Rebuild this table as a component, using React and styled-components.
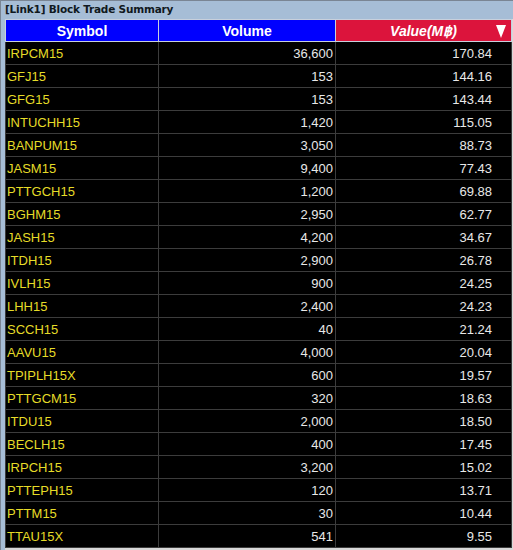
import React from 'react';
import styled, {createGlobalStyle} from 'styled-components';

const GlobalStyle = createGlobalStyle`
    html, body {
        margin: 0;
        padding: 0;
        background: #d4d0c8;
    }
`;

const rows = [
    ['IRPCM15', '36,600', '170.84'],
    ['GFJ15', '153', '144.16'],
    ['GFG15', '153', '143.44'],
    ['INTUCHH15', '1,420', '115.05'],
    ['BANPUM15', '3,050', '88.73'],
    ['JASM15', '9,400', '77.43'],
    ['PTTGCH15', '1,200', '69.88'],
    ['BGHM15', '2,950', '62.77'],
    ['JASH15', '4,200', '34.67'],
    ['ITDH15', '2,900', '26.78'],
    ['IVLH15', '900', '24.25'],
    ['LHH15', '2,400', '24.23'],
    ['SCCH15', '40', '21.24'],
    ['AAVU15', '4,000', '20.04'],
    ['TPIPLH15X', '600', '19.57'],
    ['PTTGCM15', '320', '18.63'],
    ['ITDU15', '2,000', '18.50'],
    ['BECLH15', '400', '17.45'],
    ['IRPCH15', '3,200', '15.02'],
    ['PTTEPH15', '120', '13.71'],
    ['PTTM15', '30', '10.44'],
    ['TTAU15X', '541', '9.55'],
];

const Frame = styled.div`
    width: 513px;
    height: 550px;
    box-sizing: border-box;
    background: #a6bdd6;
    border-top: 1px solid #7a8594;
    border-left: 1px solid #7a8594;
    display: flex;
    flex-direction: column;
    overflow: hidden;
`;

const TitleBar = styled.div`
    height: 18px;
    line-height: 17px;
    padding-left: 4px;
    font-family: "DejaVu Sans", sans-serif;
    font-weight: bold;
    font-size: 10.5px;
    letter-spacing: -0.2px;
    color: #101820;
`;

const Body = styled.div`
    flex: 1;
    padding: 0 2px 0 4px;
    display: flex;
    flex-direction: column;
    background: linear-gradient(#a6bdd6, #a6bdd6) left / 4px 100% no-repeat, #d8d8d8;
`;

const Grid = styled.table`
    border-collapse: collapse;
    table-layout: fixed;
    width: 506px;
    background: #000;
    font-family: "Liberation Sans", Arial, sans-serif;
    font-size: 13px;
`;

const HeadCell = styled.th`
    height: 22px;
    padding: 0 6px;
    box-sizing: border-box;
    background: ${p => p.$sorted ? '#dc143c' : '#0000ff'};
    color: #fff;
    font-size: 14px;
    font-weight: bold;
    font-style: ${p => p.$sorted ? 'italic' : 'normal'};
    text-align: center;
    border: 1px solid #c8d0dc;
    position: relative;
`;

const SortArrow = styled.span`
    position: absolute;
    right: 5px;
    top: 5px;
    width: 0;
    height: 0;
    border-left: 5px solid transparent;
    border-right: 5px solid transparent;
    border-top: 13px solid #fff;
`;

const Cell = styled.td`
    height: 23px;
    padding: 0 ${p => p.$pad || 2}px 0 1px;
    box-sizing: border-box;
    border: 1px solid #3c3c3c;
    border-top: none;
    color: ${p => p.$symbol ? '#e6dc28' : '#e8e8e8'};
    text-align: ${p => p.$right ? 'right' : 'left'};
    white-space: nowrap;
    overflow: hidden;
`;

const App = () => (
    <Frame>
        <GlobalStyle />
        <TitleBar>[Link1] Block Trade Summary</TitleBar>
        <Body>
            <Grid>
                <colgroup>
                    <col style={{width: 153}} />
                    <col style={{width: 177}} />
                    <col style={{width: 176}} />
                </colgroup>
                <thead>
                    <tr>
                        <HeadCell>Symbol</HeadCell>
                        <HeadCell>Volume</HeadCell>
                        <HeadCell $sorted>Value(M฿)<SortArrow /></HeadCell>
                    </tr>
                </thead>
                <tbody>
                    {rows.map(([sym, vol, val]) => (
                        <tr key={sym}>
                            <Cell $symbol>{sym}</Cell>
                            <Cell $right $pad={2}>{vol}</Cell>
                            <Cell $right $pad={19}>{val}</Cell>
                        </tr>
                    ))}
                </tbody>
            </Grid>
        </Body>
    </Frame>
);

export default App;
